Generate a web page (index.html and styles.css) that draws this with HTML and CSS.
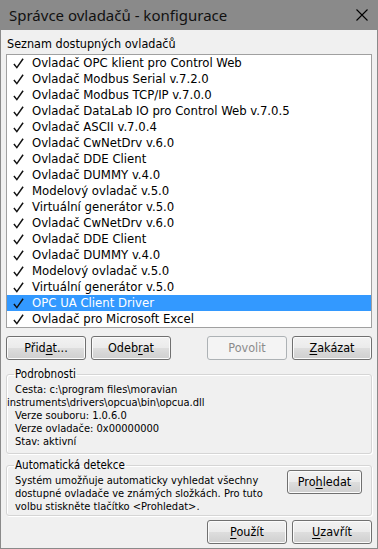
FILE: index.html
```html
<!DOCTYPE html>
<html lang="cs">
<head>
<meta charset="utf-8">
<title>Správce ovladačů - konfigurace</title>
<link rel="stylesheet" href="styles.css">
</head>
<body>
<div class="window">
  <div class="titlebar">
    <span class="title">Správce ovladačů - konfigurace</span>
    <svg class="close" width="12" height="12" viewBox="0 0 12 12"><path d="M0.5 0.5 L11.5 11.5 M11.5 0.5 L0.5 11.5" stroke="#000" stroke-width="1.1" fill="none"/></svg>
  </div>
  <div class="client">
    <div class="caption">Seznam dostupných ovladačů</div>
    <div class="list">
      <div class="item"><svg class="check" viewBox="0 0 12 12"><path d="M1 6.5 L4.2 10.5 L11 0.8" stroke="#111" stroke-width="1.6" fill="none"/></svg><span>Ovladač OPC klient pro Control Web</span></div>
      <div class="item"><svg class="check" viewBox="0 0 12 12"><path d="M1 6.5 L4.2 10.5 L11 0.8" stroke="#111" stroke-width="1.6" fill="none"/></svg><span>Ovladač Modbus Serial v.7.2.0</span></div>
      <div class="item"><svg class="check" viewBox="0 0 12 12"><path d="M1 6.5 L4.2 10.5 L11 0.8" stroke="#111" stroke-width="1.6" fill="none"/></svg><span>Ovladač Modbus TCP/IP v.7.0.0</span></div>
      <div class="item"><svg class="check" viewBox="0 0 12 12"><path d="M1 6.5 L4.2 10.5 L11 0.8" stroke="#111" stroke-width="1.6" fill="none"/></svg><span>Ovladač DataLab IO pro Control Web v.7.0.5</span></div>
      <div class="item"><svg class="check" viewBox="0 0 12 12"><path d="M1 6.5 L4.2 10.5 L11 0.8" stroke="#111" stroke-width="1.6" fill="none"/></svg><span>Ovladač ASCII v.7.0.4</span></div>
      <div class="item"><svg class="check" viewBox="0 0 12 12"><path d="M1 6.5 L4.2 10.5 L11 0.8" stroke="#111" stroke-width="1.6" fill="none"/></svg><span>Ovladač CwNetDrv v.6.0</span></div>
      <div class="item"><svg class="check" viewBox="0 0 12 12"><path d="M1 6.5 L4.2 10.5 L11 0.8" stroke="#111" stroke-width="1.6" fill="none"/></svg><span>Ovladač DDE Client</span></div>
      <div class="item"><svg class="check" viewBox="0 0 12 12"><path d="M1 6.5 L4.2 10.5 L11 0.8" stroke="#111" stroke-width="1.6" fill="none"/></svg><span>Ovladač DUMMY v.4.0</span></div>
      <div class="item"><svg class="check" viewBox="0 0 12 12"><path d="M1 6.5 L4.2 10.5 L11 0.8" stroke="#111" stroke-width="1.6" fill="none"/></svg><span>Modelový ovladač v.5.0</span></div>
      <div class="item"><svg class="check" viewBox="0 0 12 12"><path d="M1 6.5 L4.2 10.5 L11 0.8" stroke="#111" stroke-width="1.6" fill="none"/></svg><span>Virtuální generátor v.5.0</span></div>
      <div class="item"><svg class="check" viewBox="0 0 12 12"><path d="M1 6.5 L4.2 10.5 L11 0.8" stroke="#111" stroke-width="1.6" fill="none"/></svg><span>Ovladač CwNetDrv v.6.0</span></div>
      <div class="item"><svg class="check" viewBox="0 0 12 12"><path d="M1 6.5 L4.2 10.5 L11 0.8" stroke="#111" stroke-width="1.6" fill="none"/></svg><span>Ovladač DDE Client</span></div>
      <div class="item"><svg class="check" viewBox="0 0 12 12"><path d="M1 6.5 L4.2 10.5 L11 0.8" stroke="#111" stroke-width="1.6" fill="none"/></svg><span>Ovladač DUMMY v.4.0</span></div>
      <div class="item"><svg class="check" viewBox="0 0 12 12"><path d="M1 6.5 L4.2 10.5 L11 0.8" stroke="#111" stroke-width="1.6" fill="none"/></svg><span>Modelový ovladač v.5.0</span></div>
      <div class="item"><svg class="check" viewBox="0 0 12 12"><path d="M1 6.5 L4.2 10.5 L11 0.8" stroke="#111" stroke-width="1.6" fill="none"/></svg><span>Virtuální generátor v.5.0</span></div>
      <div class="item selected"><svg class="check" viewBox="0 0 12 12"><path d="M1 6.5 L4.2 10.5 L11 0.8" stroke="#111" stroke-width="1.6" fill="none"/></svg><span>OPC UA Client Driver</span></div>
      <div class="item"><svg class="check" viewBox="0 0 12 12"><path d="M1 6.5 L4.2 10.5 L11 0.8" stroke="#111" stroke-width="1.6" fill="none"/></svg><span>Ovladač pro Microsoft Excel</span></div>
    </div>
    <div class="btnrow">
      <button class="btn">Přid<u>a</u>t...</button>
      <button class="btn">Odeb<u>r</u>at</button>
      <span class="spacer"></span>
      <button class="btn" disabled>Povolit</button>
      <button class="btn"><u>Z</u>akázat</button>
    </div>
    <fieldset class="group details">
      <legend>Podrobnosti</legend>
      <div class="line">Cesta: c:\program files\moravian</div>
      <div class="line overflow">instruments\drivers\opcua\bin\opcua.dll</div>
      <div class="line">Verze souboru: 1.0.6.0</div>
      <div class="line">Verze ovladače: 0x00000000</div>
      <div class="line">Stav: aktivní</div>
    </fieldset>
    <fieldset class="group detect">
      <legend>Automatická detekce</legend>
      <div class="detect-body">
        <div class="detect-text">
          <div class="line">Systém umožňuje automaticky vyhledat všechny</div>
          <div class="line">dostupné ovladače ve známých složkách. Pro tuto</div>
          <div class="line">volbu stiskněte tlačítko &lt;Prohledat&gt;.</div>
        </div>
        <button class="btn search">Pro<u>h</u>ledat</button>
      </div>
    </fieldset>
    <div class="btnrow bottom">
      <span class="spacer"></span>
      <button class="btn"><u>P</u>oužít</button>
      <button class="btn"><u>U</u>zavřít</button>
    </div>
  </div>
</div>
</body>
</html>
```

FILE: styles.css
```css
* { box-sizing: border-box; }
html, body { margin: 0; padding: 0; }
body {
  width: 378px;
  height: 549px;
  overflow: hidden;
  background: #f0f0f0;
  font-family: "DejaVu Sans Condensed", "DejaVu Sans", sans-serif;
  font-size: 13px;
  color: #000;
}
.window {
  width: 378px;
  height: 549px;
  border: 1px solid #8a8a8a;
  border-top: none;
  background: #f0f0f0;
  display: flex;
  flex-direction: column;
}
.titlebar {
  height: 30px;
  background: #8a8a8a;
  display: flex;
  align-items: center;
  justify-content: space-between;
  padding: 0 10px 0 9px;
  margin: 0 -1px;
}
.title {
  font-family: "Noto Sans", "Open Sans", sans-serif;
  font-size: 15px;
  color: #111;
}
.close { width: 12px; height: 12px; }
.client {
  flex: 1;
  padding: 6px 5px 0 5px;
  display: flex;
  flex-direction: column;
}
.caption {
  line-height: 16px;
  height: 16px;
  padding-left: 1px;
  font-size: 12.5px;
}
.list {
  margin-top: 2px;
  height: 274px;
  background: #fff;
  border: 1px solid #a0a0a0;
  overflow: hidden;
}
.item {
  height: 16px;
  line-height: 16px;
  display: flex;
  align-items: center;
  white-space: nowrap;
}
.item .check {
  width: 11px;
  height: 11px;
  margin: 0 8px 0 6px;
  flex: none;
}
.item.selected {
  background: #3399ff;
  color: #fff;
}
.btnrow {
  margin-top: 8px;
  display: flex;
  gap: 5px;
  height: 24px;
}
.spacer { flex: 1; }
.btn {
  width: 80px;
  height: 24px;
  flex: none;
  font-family: inherit;
  font-size: 12.5px;
  color: #000;
  border: 1px solid #707070;
  border-radius: 3px;
  background: linear-gradient(#f2f2f2 0%, #ebebeb 48%, #dddddd 52%, #cfcfcf 100%);
  box-shadow: inset 0 0 0 1px #fbfbfb;
  padding: 0;
  line-height: 20px;
}
.btn u { text-underline-offset: 2px; }
.btn:disabled {
  border-color: #adb2b5;
  background: #f4f4f4;
  box-shadow: none;
  color: #8b8b8b;
}
.group {
  margin: 0;
  border: 1px solid #d5d5d5;
  border-radius: 3px;
  box-shadow: inset 1px 1px 0 #fff, 1px 1px 0 #fff;
  padding: 2px 8px 5px 8px;
  min-width: 0;
  font-size: 11px;
}
.group legend {
  padding: 0 1px;
  margin-left: -1px;
  line-height: 13px;
  font-size: 11.5px;
}
.details { margin-top: 8px; }
.line {
  line-height: 13px;
  height: 13px;
  white-space: nowrap;
}
.line.overflow { margin-left: -8px; }
.detect { margin-top: 5px; padding-bottom: 2px; padding-right: 9px; }
.detect-body {
  display: flex;
  justify-content: space-between;
  align-items: flex-start;
}
.btn.search {
  width: 75px;
  margin-top: -4px;
}
.btnrow.bottom { margin-top: 4px; }
```
